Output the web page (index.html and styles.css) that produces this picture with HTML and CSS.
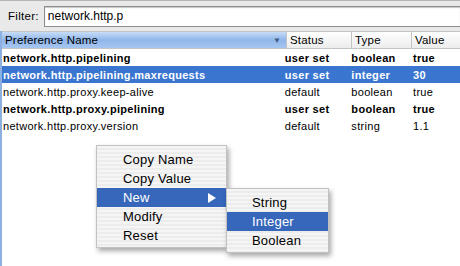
FILE: index.html
```html
<!DOCTYPE html>
<html lang="en">
<head>
    <meta charset="UTF-8">
    <title>about:config</title>
    <link rel="stylesheet" href="styles.css">
</head>
<body>

<div class="toolbar">
    <label for="filter">Filter:</label>
    <input type="text" id="filter" value="network.http.p">
</div>

<div class="tree">
    <div class="head">
        <div class="col name sorted">Preference Name <span class="arrow">&#9660;</span></div>
        <div class="col status">Status</div>
        <div class="col type">Type</div>
        <div class="col value">Value</div>
    </div>
    <div class="row bold">
        <div class="name">network.http.pipelining</div>
        <div class="status">user set</div>
        <div class="type">boolean</div>
        <div class="value">true</div>
    </div>
    <div class="row bold selected">
        <div class="name">network.http.pipelining.maxrequests</div>
        <div class="status">user set</div>
        <div class="type">integer</div>
        <div class="value">30</div>
    </div>
    <div class="row">
        <div class="name">network.http.proxy.keep-alive</div>
        <div class="status">default</div>
        <div class="type">boolean</div>
        <div class="value">true</div>
    </div>
    <div class="row bold">
        <div class="name">network.http.proxy.pipelining</div>
        <div class="status">user set</div>
        <div class="type">boolean</div>
        <div class="value">true</div>
    </div>
    <div class="row">
        <div class="name">network.http.proxy.version</div>
        <div class="status">default</div>
        <div class="type">string</div>
        <div class="value">1.1</div>
    </div>
</div>

<ul class="menu main-menu">
    <li>Copy Name</li>
    <li>Copy Value</li>
    <li class="active sub">New <span class="tri"></span></li>
    <li>Modify</li>
    <li>Reset</li>
</ul>

<ul class="menu sub-menu">
    <li>String</li>
    <li class="active">Integer</li>
    <li>Boolean</li>
</ul>

</body>
</html>
```

FILE: styles.css
```css
body {
    margin: 0;
    font-family: "Liberation Sans", Arial, sans-serif;
    font-size: 11px;
    color: #000;
    background: #fff;
    width: 460px;
    height: 266px;
    overflow: hidden;
    position: relative;
}
.toolbar {
    display: flex;
    align-items: center;
    height: 31px;
    padding-left: 8px;
    background: #e9e9e9;
    border-top: 1px solid #b5b5b5;
    box-sizing: border-box;
}
.toolbar label {
    font-size: 11.5px;
    margin-right: 5px;
    letter-spacing: 0.3px;
}
.toolbar input {
    flex: 1;
    height: 19px;
    border: 1px solid #8c8c8c;
    border-right: none;
    padding: 0 3px;
    font-family: "Liberation Sans", Arial, sans-serif;
    font-size: 12px;
    box-shadow: inset 0 1px 1px #c8c8c8;
    outline: none;
}
.tree {
    border-left: 2px solid #8cb0e0;
    height: 235px;
}
.head {
    display: flex;
    height: 16px;
    border-top: 1px solid #c4c4c4;
    border-bottom: 1px solid #c4c4c4;
    background: linear-gradient(#ffffff, #ececec);
}
.col {
    display: flex;
    align-items: center;
    padding-left: 3px;
    border-right: 1px solid #c4c4c4;
    box-sizing: border-box;
    font-size: 11.5px;
    letter-spacing: 0.2px;
}
.head .sorted {
    background: linear-gradient(#c7dcf7, #8fb6ea 50%, #a6c6f1);
}
.arrow {
    margin-left: auto;
    margin-right: 5px;
    font-size: 8px;
    color: #3e5a80;
}
.name { width: 285px; }
.status { width: 65px; }
.type { width: 60px; }
.value { width: 48px; border-right: none; }
.row {
    display: flex;
    align-items: center;
    height: 17px;
    font-size: 11px;
    letter-spacing: 0.3px;
}
.row div {
    padding-left: 1px;
    white-space: nowrap;
}
.row .status, .row .type, .row .value { padding-left: 3px; }
.bold { font-weight: bold; }
.selected {
    background: #3a76d0;
    color: #fff;
}
.menu {
    position: absolute;
    margin: 0;
    list-style: none;
    font-size: 13px;
    letter-spacing: 0.2px;
    background: repeating-linear-gradient(#f5f5f5 0, #f5f5f5 2px, #ececec 2px, #ececec 4px);
    border: 1px solid #c2c2c2;
    box-shadow: 2px 3px 5px rgba(0, 0, 0, 0.35);
}
.menu li {
    height: 19px;
    line-height: 19px;
    position: relative;
}
.menu .active {
    background: #3667bb;
    color: #fff;
}
.main-menu {
    left: 96px;
    top: 145px;
    width: 129px;
    padding: 4px 0 2px;
}
.main-menu li { padding-left: 26px; }
.sub-menu {
    left: 226px;
    top: 188px;
    width: 101px;
    padding: 4px 0 2px;
}
.sub-menu li { padding-left: 25px; }
.tri {
    position: absolute;
    right: 10px;
    top: 5px;
    width: 0;
    height: 0;
    border-top: 5px solid transparent;
    border-bottom: 5px solid transparent;
    border-left: 8px solid #fff;
}
```
